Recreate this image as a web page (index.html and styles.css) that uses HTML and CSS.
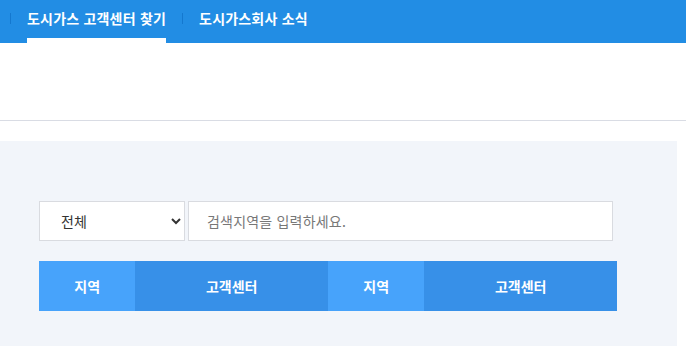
FILE: index.html
```html
<!DOCTYPE html>
<html lang="ko">
<head>
    <meta charset="UTF-8">
    <meta name="viewport" content="width=device-width, initial-scale=1.0">
    <title>도시가스 고객센터 찾기</title>
    <link rel="stylesheet" href="styles.css">
</head>
<body>
    <div class="topmenu">
        <ul class="tabs">
            <li><a href="#" class="on">도시가스 고객센터 찾기</a></li>
            <li><a href="#">도시가스회사 소식</a></li>
        </ul>
    </div>
    <div class="titlearea"></div>
    <div class="searchbox">
        <div class="searchrow">
            <select class="area">
                <option>전체</option>
            </select>
            <input type="text" class="keyword" placeholder="검색지역을 입력하세요.">
        </div>
        <div class="resulthead">
            <div class="col light">지역</div>
            <div class="col dark">고객센터</div>
            <div class="col light">지역</div>
            <div class="col dark">고객센터</div>
        </div>
    </div>
</body>
</html>
```

FILE: styles.css
```css
body {
    margin: 0;
    background-color: #fff;
    font-family: "Noto Sans CJK KR", "Noto Sans", sans-serif;
    color: #333;
}

.topmenu {
    height: 43px;
    background-color: #228de4;
}

.tabs {
    display: flex;
    margin: 0;
    padding: 0 0 0 10px;
    list-style: none;
}

.tabs li {
    display: flex;
    align-items: flex-start;
}

.tabs li::before {
    content: '';
    width: 1px;
    height: 11px;
    margin-top: 13px;
    background-color: #1478cf;
}

.tabs a {
    display: block;
    box-sizing: border-box;
    height: 43px;
    margin: 0 16px;
    padding-top: 8px;
    font-size: 14px;
    font-weight: bold;
    line-height: 20px;
    letter-spacing: 0.2px;
    color: #fff;
    text-decoration: none;
}

.tabs a.on {
    box-shadow: inset 0 -5px 0 #fff;
}

.titlearea {
    height: 77px;
    border-bottom: 1px solid #d9dce4;
    margin-bottom: 20px;
}

.searchbox {
    width: 677px;
    height: 205px;
    box-sizing: border-box;
    padding: 60px 0 0 39px;
    background-color: #f2f5fa;
}

.searchrow {
    display: flex;
    gap: 3px;
    width: 574px;
}

.area,
.keyword {
    box-sizing: border-box;
    height: 40px;
    border: 1px solid #d9dbe0;
    background-color: #fff;
    font-family: inherit;
    font-size: 14px;
    outline: none;
}

.area {
    width: 146px;
    padding: 0 6px 0 17px;
    color: #333;
}

.keyword {
    flex: 1;
    padding: 0 18px;
    letter-spacing: 0.2px;
    color: #333;
}

.keyword::placeholder {
    color: #777;
}

.resulthead {
    display: grid;
    grid-template-columns: 1fr 2fr 1fr 2fr;
    width: 578px;
    height: 50px;
    margin-top: 20px;
}

.col {
    display: flex;
    align-items: center;
    justify-content: center;
    font-size: 14px;
    font-weight: bold;
    color: #fff;
}

.col.light {
    background-color: #47a3fb;
}

.col.dark {
    background-color: #3790e8;
}
```
